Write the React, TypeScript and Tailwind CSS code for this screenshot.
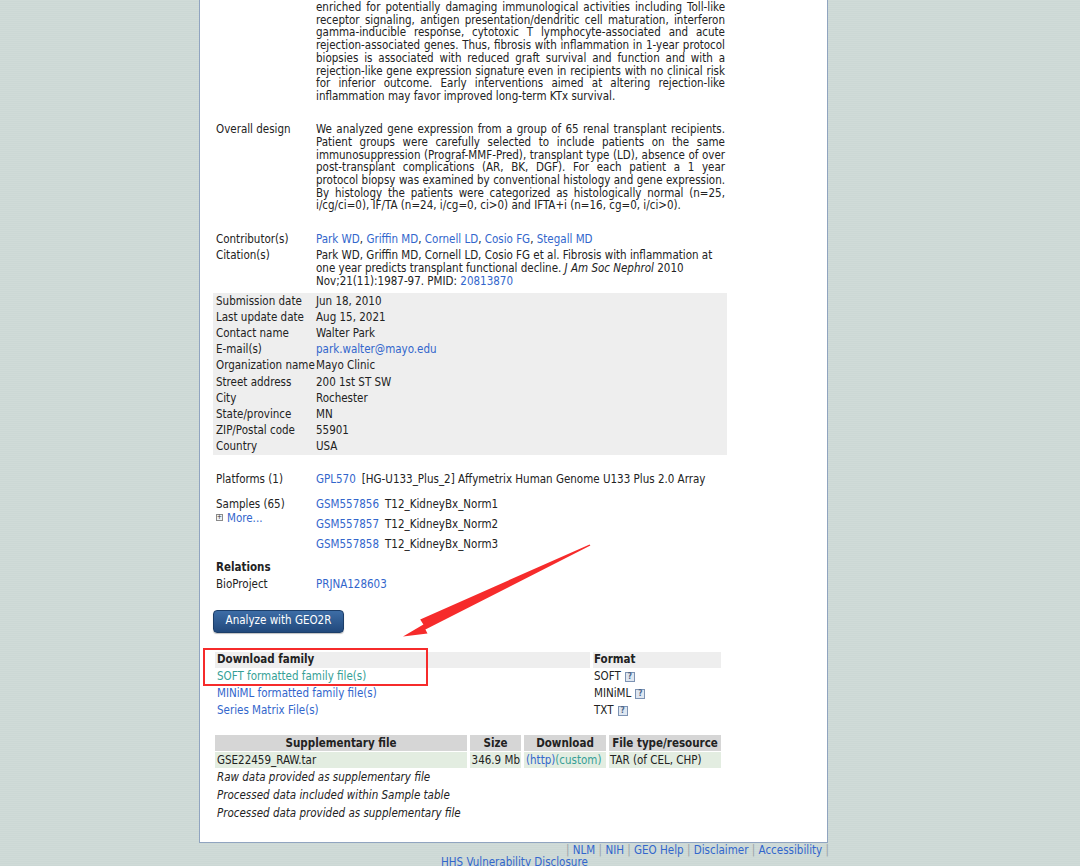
import React from "react";

const link = "text-[#3266cc]";
const visited = "text-[#369f96]";

function JLine({ children, last }: { children: React.ReactNode; last?: boolean }) {
  return (
    <div className={last ? "whitespace-nowrap" : "text-justify [text-align-last:justify] whitespace-nowrap"}>
      {children}
    </div>
  );
}

function Help() {
  return (
    <span className="ml-[4px] inline-flex h-[10px] w-[10px] items-center justify-center border border-[#7d93b3] bg-[#dfe7f1] align-[-1px] text-[8px] font-bold leading-none text-[#4a6488]">
      ?
    </span>
  );
}

const para1 = [
  "enriched for potentially damaging immunological activities including Toll-like",
  "receptor signaling, antigen presentation/dendritic cell maturation, interferon",
  "gamma-inducible response, cytotoxic T lymphocyte-associated and acute",
  "rejection-associated genes. Thus, fibrosis with inflammation in 1-year protocol",
  "biopsies is associated with reduced graft survival and function and with a",
  "rejection-like gene expression signature even in recipients with no clinical risk",
  "for inferior outcome. Early interventions aimed at altering rejection-like",
  "inflammation may favor improved long-term KTx survival.",
];

const design = [
  "We analyzed gene expression from a group of 65 renal transplant recipients.",
  "Patient groups were carefully selected to include patients on the same",
  "immunosuppression (Prograf-MMF-Pred), transplant type (LD), absence of over",
  "post-transplant complications (AR, BK, DGF). For each patient a 1 year",
  "protocol biopsy was examined by conventional histology and gene expression.",
  "By histology the patients were categorized as histologically normal (n=25,",
  "i/cg/ci=0), IF/TA (n=24, i/cg=0, ci>0) and IFTA+i (n=16, cg=0, i/ci>0).",
];

const contact: [string, React.ReactNode][] = [
  ["Submission date", "Jun 18, 2010"],
  ["Last update date", "Aug 15, 2021"],
  ["Contact name", "Walter Park"],
  ["E-mail(s)", <span className={link}>park.walter@mayo.edu</span>],
  ["Organization name", "Mayo Clinic"],
  ["Street address", "200 1st ST SW"],
  ["City", "Rochester"],
  ["State/province", "MN"],
  ["ZIP/Postal code", "55901"],
  ["Country", "USA"],
];

export default function App() {
  return (
    <div className="relative min-h-[866px] overflow-hidden bg-[repeating-linear-gradient(0deg,#ccd8d5_0px,#ccd8d5_1px,#d0dbd8_1px,#d0dbd8_2px)] font-['DejaVu_Sans_Condensed','Liberation_Sans',sans-serif] text-[11.5px] text-[#222]">
      <div className="ml-[199px] w-[629px] border-x border-b border-[#90a4c0] bg-white pb-[20px] pl-[13px]">
        <div className="w-[514px]">
          {/* Summary tail */}
          <div className="grid grid-cols-[100px_409px] pl-[3px] pt-[1px] leading-[12.7px]">
            <div />
            <div>
              {para1.map((l, i) => (
                <JLine key={i} last={i === para1.length - 1}>
                  {l}
                </JLine>
              ))}
            </div>
          </div>

          <div className="mt-[20.5px] grid grid-cols-[100px_409px] pl-[3px] leading-[12.7px]">
            <div>Overall design</div>
            <div>
              {design.map((l, i) => (
                <JLine key={i} last={i === design.length - 1}>
                  {l}
                </JLine>
              ))}
            </div>
          </div>

          <div className="mt-[21px] grid grid-cols-[100px_409px] pl-[3px] leading-[13px]">
            <div>Contributor(s)</div>
            <div className="whitespace-nowrap">
              <span className={link}>Park WD</span>, <span className={link}>Griffin MD</span>,{" "}
              <span className={link}>Cornell LD</span>, <span className={link}>Cosio FG</span>,{" "}
              <span className={link}>Stegall MD</span>
            </div>
          </div>

          <div className="mt-[3px] grid grid-cols-[100px_409px] pl-[3px] leading-[13px]">
            <div>Citation(s)</div>
            <div className="whitespace-nowrap">
              <div>Park WD, Griffin MD, Cornell LD, Cosio FG et al. Fibrosis with inflammation at</div>
              <div>
                one year predicts transplant functional decline. <i>J Am Soc Nephrol</i> 2010
              </div>
              <div>
                Nov;21(11):1987-97. PMID: <span className={link}>20813870</span>
              </div>
            </div>
          </div>

          {/* Contact table */}
          <div className="mt-[4.5px] bg-[#eeeeee]">
            {contact.map(([k, v], i) => (
              <div key={i} className="grid grid-cols-[100px_1fr] pl-[3px] leading-[16.2px]">
                <div className="whitespace-nowrap">{k}</div>
                <div>{v}</div>
              </div>
            ))}
          </div>

          <div className="mt-[18.5px] grid grid-cols-[100px_1fr] pl-[3px] leading-[13px]">
            <div>Platforms (1)</div>
            <div className="whitespace-nowrap">
              <span className={link}>GPL570</span>
              <span className="ml-[6px]">[HG-U133_Plus_2] Affymetrix Human Genome U133 Plus 2.0 Array</span>
            </div>
          </div>

          <div className="mt-[7.5px] grid grid-cols-[100px_1fr] pl-[3px]">
            <div className="pt-[3px] leading-[14px]">
              <div>Samples (65)</div>
              <div className="flex items-center">
                <span className="mr-[4px] inline-flex h-[7px] w-[7px] items-center justify-center border border-[#8a8a8a] bg-[#eef2f6] text-[7px] leading-none text-[#333]">
                  +
                </span>
                <span className={link}>More...</span>
              </div>
            </div>
            <div className="leading-[20px]">
              {["1", "2", "3"].map((n, i) => (
                <div key={n} className="whitespace-nowrap">
                  <span className={link}>GSM55785{6 + i}</span>
                  <span className="ml-[6px]">T12_KidneyBx_Norm{n}</span>
                </div>
              ))}
            </div>
          </div>

          <div className="mt-[7.5px] pl-[3px] font-bold leading-[13px]">Relations</div>
          <div className="mt-[4px] grid grid-cols-[100px_1fr] pl-[3px] leading-[13px]">
            <div>BioProject</div>
            <div className={link}>PRJNA128603</div>
          </div>

          <div className="mt-[18.5px]">
            <button className="h-[23px] w-[131px] rounded-[4px] border border-[#1c3e69] bg-gradient-to-b from-[#3d6da6] to-[#22497c] text-[11.5px] text-white shadow-[0_1px_1px_rgba(0,0,0,0.25)]">
              Analyze with GEO2R
            </button>
          </div>

          {/* Download family */}
          <div className="mt-[19px] grid grid-cols-[375px_128px] gap-x-[3px] pl-[2px] leading-[17px]">
            <div className="h-[16.5px] bg-[#eeeeee] pl-[2px] font-bold leading-[15px]">Download family</div>
            <div className="h-[16.5px] bg-[#eeeeee] pl-[1px] font-bold leading-[15px]">Format</div>
            <div className={`pl-[2px] ${visited}`}>SOFT formatted family file(s)</div>
            <div className="flex items-center pl-[1px]">
              SOFT
              <Help />
            </div>
            <div className={`pl-[2px] ${link}`}>MINiML formatted family file(s)</div>
            <div className="flex items-center pl-[1px]">
              MINiML
              <Help />
            </div>
            <div className={`pl-[2px] ${link}`}>Series Matrix File(s)</div>
            <div className="flex items-center pl-[1px]">
              TXT
              <Help />
            </div>
          </div>

          {/* Supplementary */}
          <div className="mt-[15.5px] grid grid-cols-[252px_51px_82px_112px] gap-x-[3px] gap-y-[1px] pl-[2px] leading-[16px]">
            <div className="bg-[#d6d6d6] text-center font-bold">Supplementary file</div>
            <div className="bg-[#d6d6d6] text-center font-bold">Size</div>
            <div className="bg-[#d6d6d6] text-center font-bold">Download</div>
            <div className="whitespace-nowrap bg-[#d6d6d6] text-center font-bold">File type/resource</div>
            <div className="bg-[#e3ede1] pl-[2px]">GSE22459_RAW.tar</div>
            <div className="whitespace-nowrap bg-[#e3ede1] pr-[1px] text-right">346.9 Mb</div>
            <div className="whitespace-nowrap bg-[#e3ede1] pl-[2px]">
              <span className={link}>(http)</span>
              <span className={visited}>(custom)</span>
            </div>
            <div className="whitespace-nowrap bg-[#e3ede1] pl-[1px]">TAR (of CEL, CHP)</div>
          </div>

          <div className="mt-[0px] pl-[4px] italic leading-[18px]">
            <div>Raw data provided as supplementary file</div>
            <div>Processed data included within Sample table</div>
            <div>Processed data provided as supplementary file</div>
          </div>
        </div>
      </div>

      {/* Footer */}
      <div className="ml-[441px] w-[388px] pt-[1.5px] leading-[12px]">
        <div className="whitespace-nowrap text-right">
          <span className="text-[#9aa3a8]">|</span> <span className={link}>NLM</span>{" "}
          <span className="text-[#9aa3a8]">|</span> <span className={link}>NIH</span>{" "}
          <span className="text-[#9aa3a8]">|</span> <span className={link}>GEO Help</span>{" "}
          <span className="text-[#9aa3a8]">|</span> <span className={link}>Disclaimer</span>{" "}
          <span className="text-[#9aa3a8]">|</span> <span className={link}>Accessibility</span>{" "}
          <span className="text-[#9aa3a8]">|</span>
        </div>
        <div className={link}>HHS Vulnerability Disclosure</div>
      </div>

      {/* Annotation overlay */}
      <div className="pointer-events-none absolute left-[203px] top-[648px] h-[38px] w-[225px] border-2 border-[#f62b2b]" />
      <svg className="pointer-events-none absolute left-0 top-0" width="1080" height="866">
        <polygon
          points="590.4,545.6 589.6,544.4 420.2,619.6 423.4,624.4 403,636.5 427.5,633.5 425.4,629.6"
          fill="#f62b2b"
        />
      </svg>
    </div>
  );
}
